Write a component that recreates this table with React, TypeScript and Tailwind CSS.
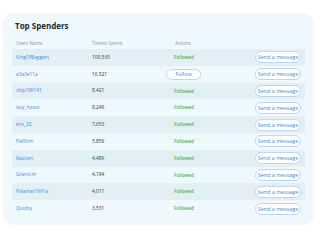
const spenders = [
  { name: "KingOfBeggars", tokens: "109,530", followed: true },
  { name: "a3a3e11a", tokens: "16,521", followed: false },
  { name: "chip199141", tokens: "8,421", followed: true },
  { name: "lazy_hoost", tokens: "8,249", followed: true },
  { name: "kris_32", tokens: "7,653", followed: true },
  { name: "Pal0lcm", tokens: "5,859", followed: true },
  { name: "Raizzen", tokens: "4,489", followed: true },
  { name: "Grand-m", tokens: "4,184", followed: true },
  { name: "Palamar1991a", tokens: "4,011", followed: true },
  { name: "Quidity", tokens: "3,531", followed: true },
];

export default function App() {
  return (
    <div className="w-[320px] h-[240px] bg-white pt-[13px] px-[3px] font-['Open_Sans',sans-serif]">
      <div className="w-[311px] h-[212px] rounded-[10px] bg-[#eff8fc] px-[9px] pt-[7px]">
        <h2 className="pl-[3px] text-[8px] leading-[12px] font-bold text-[#1f2a37]">Top Spenders</h2>
        <div className="flex items-center h-[12px] mt-[5px] pl-[4px] text-[4.6px] text-[#8a96a3]">
          <span className="w-[76px]">Users Name</span>
          <span className="w-[83px]">Tokens Spend</span>
          <span>Actions</span>
        </div>
        <div>
          {spenders.map((s, i) => (
            <div
              key={s.name}
              className={`flex items-center h-[16.8px] pl-[4px] pr-[4px] ${
                i % 2 === 0 ? "bg-[#e2f0f6]" : ""
              }`}
            >
              <span className="w-[76px] text-[4.8px] font-medium text-[#3d8fd6]">{s.name}</span>
              <span className="w-[74px] text-[4.8px] font-medium text-[#2b3440]">{s.tokens}</span>
              {s.followed ? (
                <span className="pl-[8px] text-[4.6px] font-semibold text-[#4caf50]">Followed</span>
              ) : (
                <button className="w-[35px] h-[11px] rounded-full border border-[#b9d9ee] bg-white text-[5.4px] font-medium text-[#3d8fd6]">
                  Follow
                </button>
              )}
              <button className="ml-auto w-[46px] h-[12px] rounded-full border border-[#b9d9ee] bg-white text-[5.4px] font-medium text-[#3d8fd6] whitespace-nowrap">
                Send a message
              </button>
            </div>
          ))}
        </div>
      </div>
    </div>
  );
}
